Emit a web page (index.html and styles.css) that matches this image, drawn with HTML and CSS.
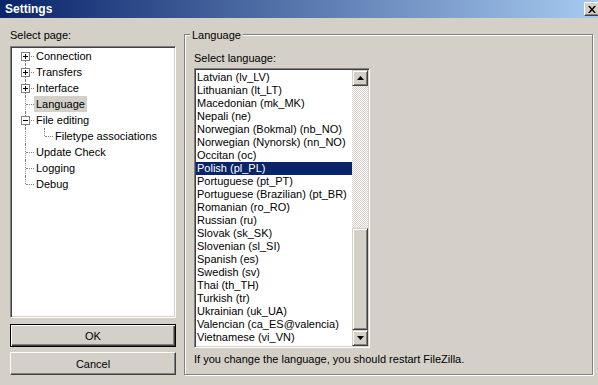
FILE: index.html
```html
<!DOCTYPE html>
<html>
<head>
    <title>Settings</title>
    <link rel="stylesheet" href="styles.css">
</head>
<body>
    <div class="titlebar">
        <span class="title">Settings</span>
        <span class="close">
            <svg width="8" height="7" viewBox="0 0 8 7"><path d="M0 0h2l2 2.5L6 0h2L5 3.5 8 7H6L4 4.5 2 7H0l3-3.5z" fill="#000"/></svg>
        </span>
    </div>
    <div class="main">
        <div class="pages">
            <div class="caption">Select page:</div>
            <div class="tree">
                <div class="node first">
                    <span class="twig"><svg class="exp" width="9" height="9" viewBox="0 0 9 9"><rect x="0.5" y="0.5" width="8" height="8" fill="#fff" stroke="#808080"/><path d="M2 4.5h5M4.5 2v5" stroke="#000"/></svg></span>
                    <span class="label">Connection</span>
                </div>
                <div class="node">
                    <span class="twig"><svg class="exp" width="9" height="9" viewBox="0 0 9 9"><rect x="0.5" y="0.5" width="8" height="8" fill="#fff" stroke="#808080"/><path d="M2 4.5h5M4.5 2v5" stroke="#000"/></svg></span>
                    <span class="label">Transfers</span>
                </div>
                <div class="node">
                    <span class="twig"><svg class="exp" width="9" height="9" viewBox="0 0 9 9"><rect x="0.5" y="0.5" width="8" height="8" fill="#fff" stroke="#808080"/><path d="M2 4.5h5M4.5 2v5" stroke="#000"/></svg></span>
                    <span class="label">Interface</span>
                </div>
                <div class="node">
                    <span class="twig"></span>
                    <span class="label selected">Language</span>
                </div>
                <div class="node">
                    <span class="twig"><svg class="exp" width="9" height="9" viewBox="0 0 9 9"><rect x="0.5" y="0.5" width="8" height="8" fill="#fff" stroke="#808080"/><path d="M2 4.5h5" stroke="#000"/></svg></span>
                    <span class="label">File editing</span>
                </div>
                <div class="node">
                    <span class="guide"></span>
                    <span class="twig last"></span>
                    <span class="label">Filetype associations</span>
                </div>
                <div class="node">
                    <span class="twig"></span>
                    <span class="label">Update Check</span>
                </div>
                <div class="node">
                    <span class="twig"></span>
                    <span class="label">Logging</span>
                </div>
                <div class="node">
                    <span class="twig last"></span>
                    <span class="label">Debug</span>
                </div>
            </div>
            <button class="btn default" type="button">OK</button>
            <button class="btn" type="button">Cancel</button>
        </div>
        <div class="group">
            <div class="group-title">Language</div>
            <div class="caption">Select language:</div>
            <div class="listbox">
                <div class="items">
                    <div class="item">Latvian (lv_LV)</div>
                    <div class="item">Lithuanian (lt_LT)</div>
                    <div class="item">Macedonian (mk_MK)</div>
                    <div class="item">Nepali (ne)</div>
                    <div class="item">Norwegian (Bokmal) (nb_NO)</div>
                    <div class="item">Norwegian (Nynorsk) (nn_NO)</div>
                    <div class="item">Occitan (oc)</div>
                    <div class="item selected">Polish (pl_PL)</div>
                    <div class="item">Portuguese (pt_PT)</div>
                    <div class="item">Portuguese (Brazilian) (pt_BR)</div>
                    <div class="item">Romanian (ro_RO)</div>
                    <div class="item">Russian (ru)</div>
                    <div class="item">Slovak (sk_SK)</div>
                    <div class="item">Slovenian (sl_SI)</div>
                    <div class="item">Spanish (es)</div>
                    <div class="item">Swedish (sv)</div>
                    <div class="item">Thai (th_TH)</div>
                    <div class="item">Turkish (tr)</div>
                    <div class="item">Ukrainian (uk_UA)</div>
                    <div class="item">Valencian (ca_ES@valencia)</div>
                    <div class="item">Vietnamese (vi_VN)</div>
                </div>
                <div class="scrollbar">
                    <div class="sb-btn"><svg width="7" height="4" viewBox="0 0 7 4"><path d="M3.5 0L7 4H0z" fill="#000"/></svg></div>
                    <div class="track">
                        <div class="thumb"></div>
                    </div>
                    <div class="sb-btn"><svg width="7" height="4" viewBox="0 0 7 4"><path d="M0 0h7L3.5 4z" fill="#000"/></svg></div>
                </div>
            </div>
            <div class="hint">If you change the language, you should restart FileZilla.</div>
        </div>
    </div>
</body>
</html>
```

FILE: styles.css
```css
body {
    margin: 0;
    width: 598px;
    height: 385px;
    overflow: hidden;
    background: #d4d0c8;
    font-family: "Liberation Sans", Arial, sans-serif;
    font-size: 11px;
    color: #000;
}
.titlebar {
    height: 18px;
    display: flex;
    align-items: center;
    justify-content: space-between;
    padding-left: 5px;
    background: linear-gradient(to right, #0a246a, #a6caf0);
    color: #fff;
}
.title {
    font-weight: bold;
    font-size: 12px;
}
.close {
    width: 16px;
    height: 14px;
    margin-right: -2px;
    box-sizing: border-box;
    display: flex;
    align-items: center;
    justify-content: center;
    background: #d4d0c8;
    border: 1px solid;
    border-color: #fff #404040 #404040 #fff;
    box-shadow: inset -1px -1px #808080;
}
.main {
    display: flex;
    gap: 8px;
    padding: 11px 0 0 10px;
}
.pages {
    width: 166px;
    display: flex;
    flex-direction: column;
}
.caption {
    line-height: 13px;
}
.tree {
    margin-top: 4px;
    height: 272px;
    box-sizing: border-box;
    background: #fff;
    border: 1px solid;
    border-color: #808080 #fff #fff #808080;
    box-shadow: inset 1px 1px #404040, inset -1px -1px #d4d0c8;
    padding: 1px;
}
.node {
    display: flex;
    height: 16px;
    line-height: 16px;
}
.twig, .guide {
    position: relative;
    flex: none;
    width: 22px;
    height: 16px;
}
.guide {
    width: 19px;
}
.twig::before, .guide::before {
    content: "";
    position: absolute;
    left: 13px;
    top: 0;
    bottom: 0;
    border-left: 1px dotted #808080;
}
.twig::after {
    content: "";
    position: absolute;
    left: 14px;
    right: 0;
    top: 8px;
    border-top: 1px dotted #808080;
}
.first .twig::before {
    top: 8px;
}
.twig.last::before {
    bottom: 8px;
}
.exp {
    position: absolute;
    left: 9px;
    top: 4px;
    z-index: 1;
}
.label {
    padding: 0 2px;
    white-space: nowrap;
}
.label.selected {
    background: #d4d0c8;
}
.btn {
    height: 23px;
    margin: 6px 0 0;
    padding: 0;
    font: inherit;
    color: #000;
    background: #d4d0c8;
    border: 1px solid;
    border-color: #fff #404040 #404040 #fff;
    box-shadow: inset -1px -1px #808080;
}
.btn.default {
    border-color: #000;
    box-shadow: inset 1px 1px #fff, inset -1px -1px #404040, inset -2px -2px #808080;
}
.btn + .btn {
    margin-top: 5px;
}
.group {
    width: 409px;
    height: 341px;
    margin-top: 5px;
    box-sizing: border-box;
    border: 1px solid #808080;
    box-shadow: inset 1px 1px #fff, 1px 1px #fff;
    padding: 0 8px 0 9px;
    display: flex;
    flex-direction: column;
}
.group-title {
    align-self: flex-start;
    margin: -6px 0 0 -4px;
    padding: 0 2px;
    line-height: 13px;
    background: #d4d0c8;
}
.group .caption {
    margin-top: 10px;
}
.listbox {
    width: 176px;
    height: 280px;
    margin-top: 3px;
    box-sizing: border-box;
    display: flex;
    background: #fff;
    border: 1px solid;
    border-color: #808080 #fff #fff #808080;
    box-shadow: inset 1px 1px #404040, inset -1px -1px #d4d0c8;
    padding: 1px;
}
.items {
    flex: 1;
    overflow: hidden;
    padding-top: 1px;
}
.item {
    height: 13px;
    line-height: 13px;
    padding: 0 1px;
    white-space: nowrap;
}
.item.selected {
    background: #0a246a;
    color: #fff;
}
.scrollbar {
    width: 16px;
    display: flex;
    flex-direction: column;
}
.sb-btn, .thumb {
    box-sizing: border-box;
    background: #d4d0c8;
    border: 1px solid;
    border-color: #d4d0c8 #404040 #404040 #d4d0c8;
    box-shadow: inset 1px 1px #fff, inset -1px -1px #808080;
}
.sb-btn {
    height: 16px;
    display: flex;
    align-items: center;
    justify-content: center;
}
.track {
    flex: 1;
    display: flex;
    flex-direction: column;
    justify-content: flex-end;
    background: repeating-conic-gradient(#fff 0 25%, #d4d0c8 0 50%) 0 0 / 2px 2px;
}
.thumb {
    height: 102px;
}
.hint {
    margin-top: 5px;
    line-height: 13px;
}
```
